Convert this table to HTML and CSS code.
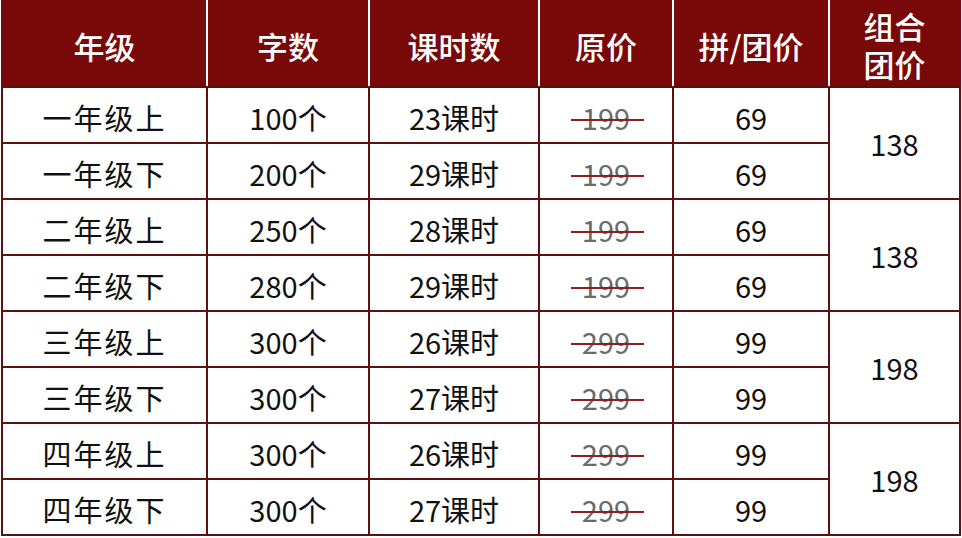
FILE: index.html
```html
<!DOCTYPE html>
<html lang="zh-CN">
<head>
<meta charset="utf-8">
<title>课程价格表</title>
<link rel="stylesheet" href="styles.css">
</head>
<body>
<table class="price-table">
  <colgroup>
    <col class="c-grade">
    <col class="c-words">
    <col class="c-hours">
    <col class="c-orig">
    <col class="c-group">
    <col class="c-combo">
  </colgroup>
  <thead>
    <tr>
      <th>年级</th>
      <th>字数</th>
      <th>课时数</th>
      <th>原价</th>
      <th>拼/团价</th>
      <th class="two-line"><span class="hline">组合</span><span class="hline">团价</span></th>
    </tr>
  </thead>
  <tbody>
    <tr>
      <td class="cjk">一年级上</td>
      <td>100个</td>
      <td>23课时</td>
      <td><span class="strike">199</span></td>
      <td>69</td>
      <td class="combo" rowspan="2">138</td>
    </tr>
    <tr>
      <td class="cjk">一年级下</td>
      <td>200个</td>
      <td>29课时</td>
      <td><span class="strike">199</span></td>
      <td>69</td>
    </tr>
    <tr>
      <td class="cjk">二年级上</td>
      <td>250个</td>
      <td>28课时</td>
      <td><span class="strike">199</span></td>
      <td>69</td>
      <td class="combo" rowspan="2">138</td>
    </tr>
    <tr>
      <td class="cjk">二年级下</td>
      <td>280个</td>
      <td>29课时</td>
      <td><span class="strike">199</span></td>
      <td>69</td>
    </tr>
    <tr>
      <td class="cjk">三年级上</td>
      <td>300个</td>
      <td>26课时</td>
      <td><span class="strike">299</span></td>
      <td>99</td>
      <td class="combo" rowspan="2">198</td>
    </tr>
    <tr>
      <td class="cjk">三年级下</td>
      <td>300个</td>
      <td>27课时</td>
      <td><span class="strike">299</span></td>
      <td>99</td>
    </tr>
    <tr>
      <td class="cjk">四年级上</td>
      <td>300个</td>
      <td>26课时</td>
      <td><span class="strike">299</span></td>
      <td>99</td>
      <td class="combo" rowspan="2">198</td>
    </tr>
    <tr>
      <td class="cjk">四年级下</td>
      <td>300个</td>
      <td>27课时</td>
      <td><span class="strike">299</span></td>
      <td>99</td>
    </tr>
  </tbody>
</table>
</body>
</html>
```

FILE: styles.css
```css
html, body {
  margin: 0;
  padding: 0;
  background: #ffffff;
}

body {
  font-family: "Noto Sans CJK SC", "Noto Sans", sans-serif;
  color: #111111;
}

.price-table {
  border-collapse: collapse;
  table-layout: fixed;
  width: 958px;
  margin: 0 0 0 1px;
}

.c-grade { width: 205px; }
.c-words { width: 162px; }
.c-hours { width: 170px; }
.c-orig { width: 134px; }
.c-group { width: 156px; }
.c-combo { width: 131px; }

.price-table th {
  background: #790909;
  color: #ffffff;
  font-size: 31px;
  font-weight: 500;
  height: 87px;
  padding: 6px 0 0 0;
  box-sizing: border-box;
  border-left: 2px solid #ffffff;
  border-right: 2px solid #ffffff;
  border-top: 0;
  border-bottom: 2px solid #5e1010;
  text-align: center;
  vertical-align: middle;
  line-height: 1.2;
}

.price-table th:first-child { border-left-color: #790909; }
.price-table th:last-child { border-right-color: #790909; }

.price-table th.two-line {
  padding-top: 3px;
}

.hline {
  display: block;
  line-height: 38px;
}

.price-table td {
  border: 2px solid #5e1010;
  height: 56px;
  padding: 4px 0 0 0;
  box-sizing: border-box;
  font-size: 29px;
  text-align: center;
  vertical-align: middle;
  line-height: 1.2;
}

.price-table td.cjk {
  letter-spacing: 2px;
}

.price-table td.combo {
  padding-top: 0;
}

.strike {
  position: relative;
  display: inline-block;
  color: #6b6b6b;
}

.strike::after {
  content: "";
  position: absolute;
  left: -11px;
  right: -14px;
  top: 55%;
  height: 2px;
  background: #8c1f1f;
}
```
